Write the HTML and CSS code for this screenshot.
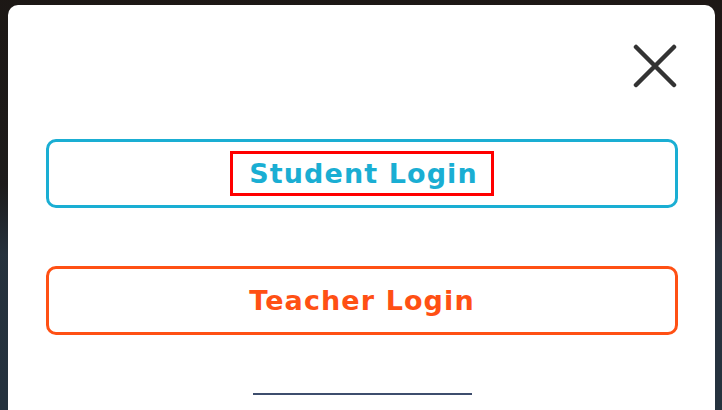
FILE: index.html
```html
<!DOCTYPE html>
<html lang="en">
<head>
<meta charset="utf-8">
<title>Login</title>
<link rel="stylesheet" href="styles.css">
</head>
<body>
<div class="modal">
  <div class="modal-head">
    <button class="close" aria-label="Close">
      <svg width="44" height="44" viewBox="0 0 44 44"><path d="M3 3 L41 41 M41 3 L3 41" stroke="#333" stroke-width="4.5" stroke-linecap="round" fill="none"/></svg>
    </button>
  </div>
  <div class="actions">
    <a class="btn btn-student" href="#"><span class="focus">Student Login</span></a>
    <a class="btn btn-teacher" href="#"><span>Teacher Login</span></a>
    <div class="divider"></div>
  </div>
</div>
</body>
</html>
```
FILE: styles.css
```css
* { box-sizing: border-box; }
html, body { margin: 0; height: 100%; overflow: hidden; }
body {
  background:
    linear-gradient(180deg, rgba(28,23,20,0.95) 0%, rgba(28,23,20,0.6) 45%, rgba(38,51,63,0.9) 62%, rgba(37,50,62,1) 100%),
    linear-gradient(90deg, #1f2226 0%, #2d2630 50%, #3b2838 100%);
  font-family: "DejaVu Sans", "Open Sans", sans-serif;
  padding: 5px 7px 0 8px;
}
.modal {
  background: #fff;
  border-radius: 10px 10px 0 0;
  height: 420px;
  padding: 0 37px 0 38px;
  display: flex;
  flex-direction: column;
}
.modal-head {
  display: flex;
  justify-content: flex-end;
  padding-top: 39px;
  padding-right: 1px;
}
.close {
  background: none;
  border: 0;
  padding: 0;
  width: 44px;
  height: 44px;
  display: block;
  cursor: pointer;
}
.close svg { display: block; }
.actions {
  display: flex;
  flex-direction: column;
  align-items: center;
  margin-top: 51px;
}
.btn {
  width: 100%;
  height: 69px;
  border: 3px solid;
  border-radius: 10px;
  display: flex;
  align-items: center;
  justify-content: center;
  text-decoration: none;
  font-weight: 700;
  font-size: 27px;
  letter-spacing: 1.1px;
}
.btn-student { color: #1aaed3; border-color: #1aaed3; }
.btn-teacher { color: #ff5014; border-color: #ff5014; margin-top: 58px; }
.focus {
  outline: 3px solid #ff0000;
  outline-offset: 0;
  padding: 4px 13px 4px 16px;
  line-height: 31px;
}
.divider {
  width: 219px;
  height: 2px;
  background: #3d4d6d;
  margin-top: 58px;
}
```
